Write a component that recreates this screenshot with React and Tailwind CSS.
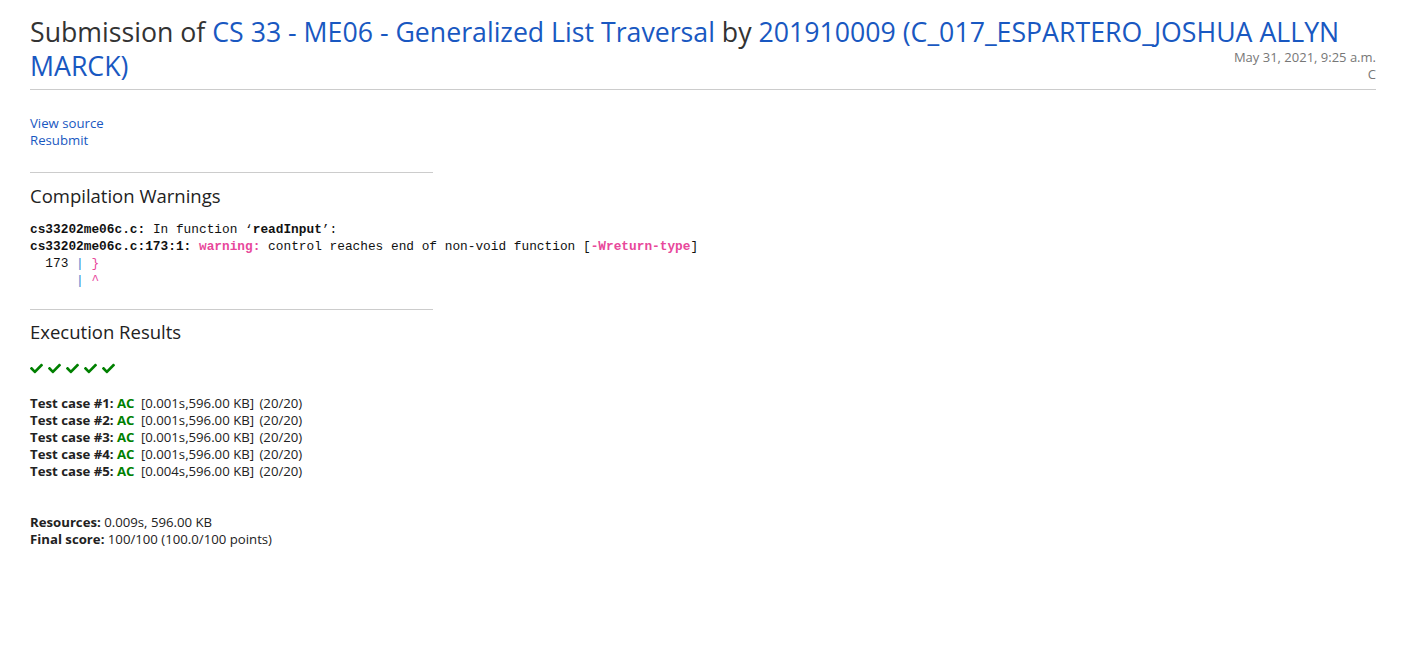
import React from 'react';

const link = 'text-[#1958c1]';

const Check = () => (
  <svg viewBox="0 0 512 512" className="w-[13px] h-[13px] fill-[#008000]">
    <path d="M173.9 439.4l-166.4-166.4c-10-10-10-26.2 0-36.2l36.2-36.2c10-10 26.2-10 36.2 0L192 312.7 432.1 72.6c10-10 26.2-10 36.2 0l36.2 36.2c10 10 10 26.2 0 36.2l-294.4 294.4c-10 10-26.2 10-36.2 0z" />
  </svg>
);

const cases = [
  ['#1', '0.001s'],
  ['#2', '0.001s'],
  ['#3', '0.001s'],
  ['#4', '0.001s'],
  ['#5', '0.004s'],
];

const App = () => {
  return (
    <div className="min-h-[649px] bg-white text-[#222] text-[13.2px] leading-[17px] px-[30px] pt-[15px]" style={{ fontFamily: '"Open Sans", "Noto Sans", sans-serif' }}>
      {/* header */}
      <div className="border-b border-[#ccc] w-[1346px] pb-[6px] relative">
        <h2 className="text-[26.7px] leading-[34px] font-normal text-[#333] pr-[10px]">
          Submission of <span className={link}>CS 33 - ME06 - Generalized List Traversal</span> by{' '}
          <span className={link}>201910009 (C_017_ESPARTERO_JOSHUA ALLYN MARCK)</span>
        </h2>
        <div className="absolute right-0 bottom-[6px] text-right text-[#777] text-[13px] leading-[17px]">
          <div>May 31, 2021, 9:25 a.m.</div>
          <div>C</div>
        </div>
      </div>

      <div className="pt-[25px] flex flex-col items-start">
        <a className={link}>View source</a>
        <a className={link}>Resubmit</a>
      </div>

      <hr className="w-[403px] border-[#ccc] mt-[23px]" />

      <h3 className="text-[18.5px] leading-[26px] mt-[10px] text-[#222]">Compilation Warnings</h3>
      <pre className="mt-[12px] text-[12.8px] leading-[17px] text-[#111]" style={{ fontFamily: '"Liberation Mono", "DejaVu Sans Mono", monospace' }}>
        <b>cs33202me06c.c:</b> In function ‘<b>readInput</b>’:{'\n'}
        <b>cs33202me06c.c:173:1:</b> <b className="text-[#e8489b]">warning: </b>control reaches end of non-void function [<b className="text-[#e8489b]">-Wreturn-type</b>]{'\n'}
        {'  173 '}<span className="text-[#2f86d1]">|</span> <span className="text-[#e8489b]">{'}'}</span>{'\n'}
        {'      '}<span className="text-[#2f86d1]">|</span> <span className="text-[#e8489b]">^</span>
      </pre>

      <hr className="w-[403px] border-[#ccc] mt-[20px]" />

      <h3 className="text-[18.5px] leading-[26px] mt-[9px] text-[#222]">Execution Results</h3>
      <div className="flex gap-[5px] mt-[17px]">
        <Check /><Check /><Check /><Check /><Check />
      </div>

      <div className="mt-[20px]">
        {cases.map(([n, t]) => (
          <div key={n}>
            <b>Test case {n}:</b> <b className="text-[#008000]">AC</b>{' '}
            <span className="ml-[3px]">[{t},596.00 KB]</span>{' '}
            <span className="ml-[2px]">(20/20)</span>
          </div>
        ))}
      </div>

      <div className="mt-[34px]">
        <div><b>Resources:</b> 0.009s, 596.00 KB</div>
        <div><b>Final score:</b> 100/100 (100.0/100 points)</div>
      </div>
    </div>
  );
};

export default App;
